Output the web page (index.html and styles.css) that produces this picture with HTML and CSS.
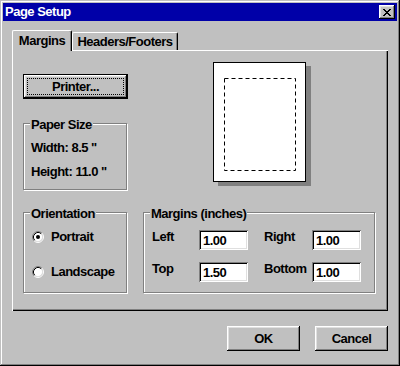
FILE: index.html
```html
<!DOCTYPE html>
<html lang="en">
<head>
    <meta charset="UTF-8">
    <meta name="viewport" content="width=device-width, initial-scale=1.0">
    <title>Page Setup</title>
    <link rel="stylesheet" href="styles.css">
</head>
<body>
    <div class="window">
        <div class="titlebar">
            <span class="title">Page Setup</span>
            <button class="close" aria-label="Close">
                <svg width="8" height="7" viewBox="0 0 8 7" shape-rendering="crispEdges">
                    <path fill="#000" d="M0 0h2v1H0zM6 0h2v1H6zM1 1h2v1H1zM5 1h2v1H5zM2 2h4v1H2zM3 3h2v1H3zM2 4h4v1H2zM1 5h2v1H1zM5 5h2v1H5zM0 6h2v1H0zM6 6h2v1H6z"/>
                </svg>
            </button>
        </div>

        <div class="tabs">
            <div class="tab active">Margins</div>
            <div class="tab inactive">Headers/Footers</div>
        </div>

        <div class="panel">
            <div class="top">
                <div class="left-col">
                    <button class="btn default"><span class="focus">Printer...</span></button>
                    <div class="group paper">
                        <span class="group-title">Paper Size</span>
                        <div class="line">Width: 8.5 "</div>
                        <div class="line">Height: 11.0 "</div>
                    </div>
                </div>
                <div class="sheet">
                    <svg width="91" height="118" viewBox="0 0 91 118">
                        <rect x="10.5" y="15.5" width="71" height="92" fill="none" stroke="#000" stroke-width="1" stroke-dasharray="4 3"/>
                    </svg>
                </div>
            </div>

            <div class="bottom">
                <div class="group orientation">
                    <span class="group-title">Orientation</span>
                    <label class="radio-row">
                        <svg width="12" height="12" viewBox="0 0 12 12">
                            <circle cx="6" cy="6" r="4.5" fill="#fff"/>
                            <path d="M2.11 9.89A5.5 5.5 0 0 1 9.89 2.11" fill="none" stroke="#808080"/>
                            <path d="M9.89 2.11A5.5 5.5 0 0 1 2.11 9.89" fill="none" stroke="#fff"/>
                            <path d="M2.82 9.18A4.5 4.5 0 0 1 9.18 2.82" fill="none" stroke="#000"/>
                            <path d="M9.18 2.82A4.5 4.5 0 0 1 2.82 9.18" fill="none" stroke="#dfdfdf"/>
                            <circle cx="6" cy="6" r="2" fill="#000"/>
                        </svg>
                        <span>Portrait</span>
                    </label>
                    <label class="radio-row">
                        <svg width="12" height="12" viewBox="0 0 12 12">
                            <circle cx="6" cy="6" r="4.5" fill="#fff"/>
                            <path d="M2.11 9.89A5.5 5.5 0 0 1 9.89 2.11" fill="none" stroke="#808080"/>
                            <path d="M9.89 2.11A5.5 5.5 0 0 1 2.11 9.89" fill="none" stroke="#fff"/>
                            <path d="M2.82 9.18A4.5 4.5 0 0 1 9.18 2.82" fill="none" stroke="#000"/>
                            <path d="M9.18 2.82A4.5 4.5 0 0 1 2.82 9.18" fill="none" stroke="#dfdfdf"/>
                        </svg>
                        <span>Landscape</span>
                    </label>
                </div>

                <div class="group margins">
                    <span class="group-title">Margins (inches)</span>
                    <div class="margins-grid">
                        <span class="lbl">Left</span>
                        <input type="text" class="field" value="1.00">
                        <span class="lbl">Right</span>
                        <input type="text" class="field" value="1.00">
                        <span class="lbl">Top</span>
                        <input type="text" class="field" value="1.50">
                        <span class="lbl">Bottom</span>
                        <input type="text" class="field" value="1.00">
                    </div>
                </div>
            </div>
        </div>

        <div class="actions">
            <button class="btn">OK</button>
            <button class="btn">Cancel</button>
        </div>
    </div>
</body>
</html>
```

FILE: styles.css
```css
* {
    margin: 0;
    padding: 0;
    box-sizing: border-box;
}

body {
    width: 400px;
    height: 366px;
    background: #c0c0c0;
    font-family: 'Liberation Sans', Arial, sans-serif;
    font-size: 13px;
    font-weight: bold;
    letter-spacing: -0.5px;
    line-height: 14px;
    color: #000;
}

button, input {
    font: inherit;
    letter-spacing: inherit;
    color: #000;
}

.window {
    width: 400px;
    height: 366px;
    padding: 3px;
    background: #c0c0c0;
    box-shadow: inset -1px -1px #000, inset 1px 1px #c0c0c0, inset -2px -2px #808080, inset 2px 2px #fff;
}

/* barra de titulo */
.titlebar {
    height: 18px;
    background: #0000a8;
    color: #fff;
    display: flex;
    align-items: center;
    justify-content: space-between;
    padding: 0 2px;
}

.close {
    width: 16px;
    height: 14px;
    border: none;
    background: #c0c0c0;
    display: flex;
    align-items: center;
    justify-content: center;
    padding-top: 1px;
    box-shadow: inset -1px -1px #000, inset 1px 1px #fff, inset -2px -2px #808080, inset 2px 2px #dfdfdf;
}

.close svg {
    display: block;
}

/* pestañas */
.tabs {
    display: flex;
    align-items: flex-end;
    height: 20px;
    margin: 9px 9px 0;
}

.tab {
    height: 18px;
    display: flex;
    align-items: center;
    justify-content: center;
    background: #c0c0c0;
    border-top: 1px solid #fff;
    border-left: 1px solid #fff;
    border-right: 1px solid #000;
    border-radius: 2px 2px 0 0;
    box-shadow: inset -1px 0 #808080;
}

.tab.active {
    width: 60px;
    height: 21px;
    margin-bottom: -1px;
    position: relative;
    z-index: 1;
}

.tab.inactive {
    width: 106px;
    padding-top: 1px;
}

.panel {
    height: 261px;
    margin: 0 9px;
    padding: 12px 11px 0;
    box-shadow: inset 1px 1px #fff, inset -1px -1px #000, inset -2px -2px #808080;
}

.top {
    display: flex;
    gap: 85px;
}

.left-col {
    width: 105px;
    margin-top: 12px;
    display: flex;
    flex-direction: column;
    align-items: flex-start;
    gap: 24px;
}

/* botones */
.btn {
    width: 73px;
    height: 25px;
    border: none;
    background: #c0c0c0;
    display: flex;
    align-items: center;
    justify-content: center;
    box-shadow: inset -1px -1px #000, inset 1px 1px #fff, inset -2px -2px #808080, inset 2px 2px #dfdfdf;
}

.btn.default {
    width: 105px;
    border: 1px solid #000;
    padding: 3px;
    box-shadow: inset -1px -1px #000, inset 1px 1px #fff, inset -2px -2px #808080, inset 2px 2px #dfdfdf;
}

.focus {
    width: 100%;
    height: 100%;
    border: 1px dotted #000;
    display: flex;
    align-items: center;
    justify-content: center;
}

/* grupos */
.group {
    position: relative;
    height: 81px;
    border: 1px solid #808080;
    box-shadow: inset 1px 1px #fff, 1px 1px #fff;
}

.group-title {
    position: absolute;
    top: -6px;
    left: 6px;
    padding: 0 1px;
    background: #c0c0c0;
    white-space: nowrap;
}

.paper {
    width: 104px;
    height: 67px;
    padding: 17px 0 0 7px;
    display: flex;
    flex-direction: column;
    gap: 10px;
}

.line {
    white-space: nowrap;
}

/* vista previa de la hoja */
.sheet {
    width: 93px;
    height: 120px;
    background: #fff;
    border: 1px solid #000;
    box-shadow: 5px 4px 0 #808080;
}

.sheet svg {
    display: block;
}

.bottom {
    display: flex;
    gap: 16px;
    margin-top: 22px;
}

.orientation {
    width: 104px;
    padding: 17px 0 0 8px;
    display: flex;
    flex-direction: column;
    gap: 21px;
}

.radio-row {
    height: 14px;
    display: flex;
    align-items: center;
    gap: 7px;
}

.radio-row svg {
    display: block;
}

.margins {
    width: 232px;
    padding: 17px 0 0 8px;
}

.margins-grid {
    display: grid;
    grid-template-columns: 47px 65px 48px 49px;
    row-gap: 12px;
    align-items: start;
}

.field {
    width: 49px;
    height: 20px;
    border: none;
    outline: none;
    background: #fff;
    padding-left: 4px;
    box-shadow: inset 1px 1px #808080, inset -1px -1px #fff, inset 2px 2px #000, inset -2px -2px #dfdfdf;
}

.actions {
    display: flex;
    justify-content: flex-end;
    gap: 15px;
    margin: 15px 9px 0 0;
}
```
